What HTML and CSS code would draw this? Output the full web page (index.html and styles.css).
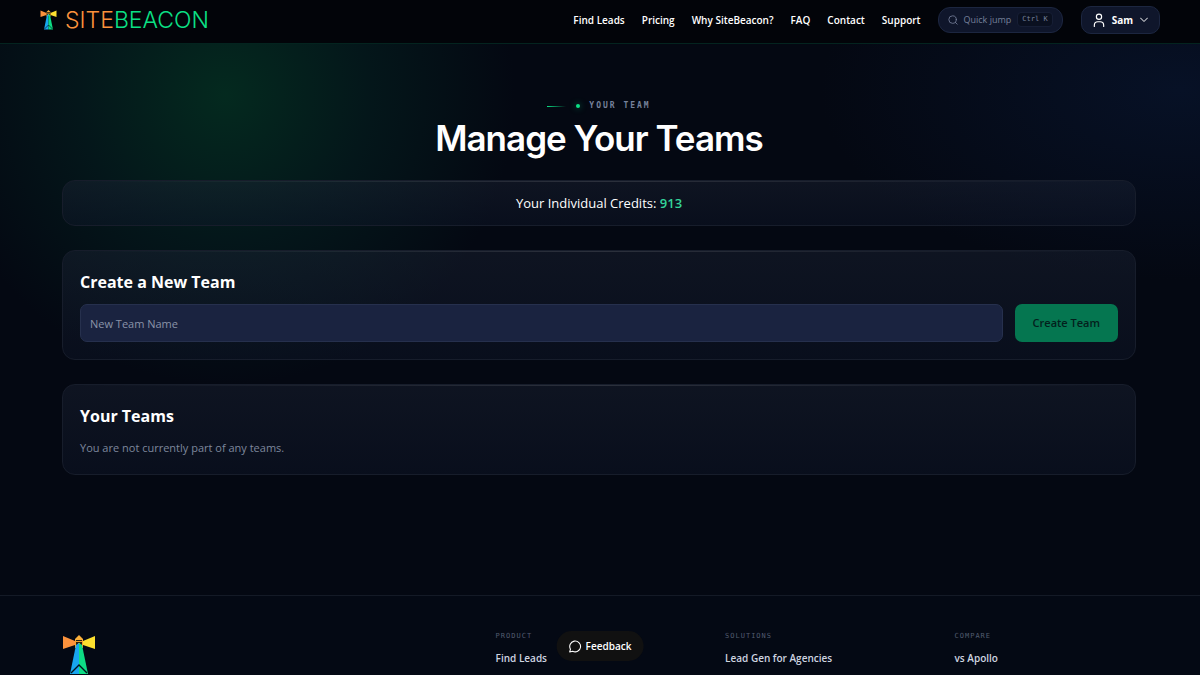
FILE: index.html
```html
<!DOCTYPE html>
<html lang="en">
<head>
    <meta charset="UTF-8">
    <meta name="viewport" content="width=device-width, initial-scale=1.0">
    <title>Manage Your Teams - SiteBeacon</title>
    <link rel="stylesheet" href="styles.css">
</head>
<body>
    <header class="header">
        <a class="brand" href="#">
            <svg class="brand-icon" viewBox="0 0 32 40" aria-hidden="true">
                <path d="M0 1l12 5v4L0 14z" fill="#fb923c"/>
                <path d="M32 1L20 6v4l12 4z" fill="#fde02f"/>
                <path d="M12 4l4-4 4 4v1h-8z" fill="#fbb03b"/>
                <path d="M12 5h8v8h-8z" fill="#2b2112"/>
                <path d="M13 6h6v1h-6zM15 8h2v4h-2zM12 5v8h1V5zM19 5v8h1V5z" fill="#f0a02c"/>
                <path d="M13 10l3-2v31H7z" fill="#18a5ee"/>
                <path d="M19 10l-3-2v31h9z" fill="#0ddc84"/>
                <path d="M8 38l8-8 8 8" fill="none" stroke="#04121c" stroke-width="1.4"/>
            </svg>
            <span class="brand-name"><span class="brand-site">SITE</span>BEACON</span>
        </a>
        <nav class="nav">
            <a href="#">Find Leads</a>
            <a href="#">Pricing</a>
            <a href="#">Why SiteBeacon?</a>
            <a href="#">FAQ</a>
            <a href="#">Contact</a>
            <a href="#">Support</a>
        </nav>
        <button class="quick-jump" type="button">
            <svg class="icon" width="10" height="10" viewBox="0 0 24 24" aria-hidden="true">
                <circle cx="11" cy="11" r="9"/>
                <path d="M22 22l-4.500-4.500"/>
            </svg>
            <span>Quick jump</span>
            <kbd>Ctrl K</kbd>
        </button>
        <button class="account" type="button">
            <svg class="icon" width="12" height="14" viewBox="0 0 20 24" aria-hidden="true">
                <circle cx="10" cy="6.500" r="4.500"/>
                <path d="M2 23v-2a6 6 0 0 1 6-6h4a6 6 0 0 1 6 6v2"/>
            </svg>
            <span>Sam</span>
            <svg class="icon" width="8" height="6" viewBox="0 0 16 12" aria-hidden="true">
                <path d="M1 2l7 7 7-7"/>
            </svg>
        </button>
    </header>

    <main class="main">
        <p class="eyebrow"><span class="eyebrow-line"></span><span class="eyebrow-dot"></span>Your Team</p>
        <h1>Manage Your Teams</h1>

        <section class="card credits">
            <p>Your Individual Credits: <strong>913</strong></p>
        </section>

        <section class="card">
            <h2><label for="team-name">Create a New Team</label></h2>
            <form class="team-form">
                <input type="text" id="team-name" placeholder="New Team Name">
                <button type="submit" disabled>Create Team</button>
            </form>
        </section>

        <section class="card">
            <h2>Your Teams</h2>
            <p class="empty">You are not currently part of any teams.</p>
        </section>
    </main>

    <footer class="footer">
        <div class="footer-grid">
            <svg class="footer-logo" viewBox="0 0 32 40" role="img" aria-label="SiteBeacon">
                <path d="M0 1l12 5v4L0 14z" fill="#fb923c"/>
                <path d="M32 1L20 6v4l12 4z" fill="#fde02f"/>
                <path d="M12 4l4-4 4 4v1h-8z" fill="#fbb03b"/>
                <path d="M12 5h8v8h-8z" fill="#2b2112"/>
                <path d="M13 6h6v1h-6zM15 8h2v4h-2zM12 5v8h1V5zM19 5v8h1V5z" fill="#f0a02c"/>
                <path d="M13 10l3-2v31H7z" fill="#18a5ee"/>
                <path d="M19 10l-3-2v31h9z" fill="#0ddc84"/>
                <path d="M8 38l8-8 8 8" fill="none" stroke="#04121c" stroke-width="1.4"/>
            </svg>
            <div class="footer-col">
                <h3>Product</h3>
                <a href="#">Find Leads</a>
            </div>
            <div class="footer-col">
                <h3>Solutions</h3>
                <a href="#">Lead Gen for Agencies</a>
            </div>
            <div class="footer-col">
                <h3>Compare</h3>
                <a href="#">vs Apollo</a>
            </div>
        </div>
    </footer>

    <button class="feedback" type="button">
        <svg class="icon" width="13" height="13" viewBox="0 0 24 24" aria-hidden="true">
            <path d="M3.500 17A10 10 0 1 1 7.500 20.800L2 22z"/>
        </svg>
        <span>Feedback</span>
    </button>
</body>
</html>
```
FILE: styles.css
```css
* {
    margin: 0;
    padding: 0;
    box-sizing: border-box;
}

body {
    min-height: 100vh;
    display: flex;
    flex-direction: column;
    color: #fff;
    font-family: "Open Sans", "Noto Sans", sans-serif;
    font-size: 12px;
    line-height: 18px;
    background:
        radial-gradient(ellipse 290px 290px at 225px 95px, rgba(4, 50, 34, 0.8), rgba(4, 44, 38, 0.4) 50%, transparent),
        radial-gradient(ellipse 360px 190px at 1180px 90px, rgba(10, 26, 58, 0.5), transparent),
        #040812;
}

a {
    color: inherit;
    text-decoration: none;
}

button,
input {
    font: inherit;
}

button {
    cursor: pointer;
}

.icon {
    fill: none;
    stroke: currentColor;
    stroke-width: 2;
    stroke-linecap: round;
    stroke-linejoin: round;
}

.header {
    display: flex;
    align-items: center;
    height: 44px;
    padding: 0 40px 4px;
    background: #020409;
    border-bottom: 1px solid #04241f;
}

.brand {
    display: flex;
    align-items: center;
    gap: 8px;
}

.brand-icon {
    width: 17px;
    height: 20px;
}

.brand-name {
    color: #0be085;
    font-family: Inter, sans-serif;
    font-size: 23px;
    font-weight: 300;
    line-height: 28px;
}

.brand-site {
    color: #fb923c;
}

.nav {
    display: flex;
    gap: 17px;
    margin-left: auto;
    font-size: 10px;
    font-weight: 600;
}

.quick-jump,
.account {
    display: flex;
    align-items: center;
    background: #0f162b;
    border: 1px solid #1c2640;
}

.quick-jump {
    gap: 6px;
    height: 26px;
    margin: 0 18px 0 17px;
    padding: 0 9px;
    border-radius: 12px;
    color: #76809a;
    font-size: 9px;
}

.quick-jump kbd {
    padding: 0 4px;
    background: #0a1020;
    border: 1px solid #161e35;
    border-radius: 4px;
    font-family: "DejaVu Sans Mono", monospace;
    font-size: 7px;
    line-height: 13px;
}

.account {
    gap: 7px;
    height: 28px;
    padding: 0 11px;
    border-radius: 10px;
    color: #fff;
    font-size: 10px;
    font-weight: 700;
}

.main {
    flex: 1;
    padding: 54px 64px 120px 62px;
}

.eyebrow {
    display: flex;
    align-items: center;
    justify-content: center;
    color: #76819b;
    font-family: "DejaVu Sans Mono", monospace;
    font-size: 8px;
    font-weight: 700;
    line-height: 16px;
    letter-spacing: 2px;
    text-transform: uppercase;
}

.eyebrow-line {
    width: 19px;
    height: 1px;
    margin-right: 10px;
    background: linear-gradient(90deg, #0be085, transparent);
}

.eyebrow-dot {
    width: 4px;
    height: 4px;
    margin-right: 9px;
    border-radius: 50%;
    background: #0be085;
    box-shadow: 0 0 6px rgba(11, 224, 133, 0.6);
}

h1 {
    margin: 4px 0 22px;
    font-family: Inter, sans-serif;
    font-size: 35px;
    font-weight: 600;
    line-height: 40px;
    letter-spacing: -1px;
    text-align: center;
}

.card {
    position: relative;
    margin-bottom: 24px;
    padding: 19px 17px 17px;
    background: linear-gradient(rgba(30, 38, 56, 0.4), rgba(16, 24, 44, 0.4));
    border: 1px solid #171d2b;
    border-radius: 13px;
}

.card:last-child {
    margin-bottom: 0;
}

/* highlight along the top edge */
.card::before {
    content: "";
    position: absolute;
    top: 0;
    left: 12px;
    right: 12px;
    height: 1px;
    background: linear-gradient(90deg, transparent, rgba(255, 255, 255, 0.12), transparent);
}

.credits {
    padding: 12px 17px;
    font-size: 13px;
    line-height: 20px;
    text-align: center;
}

.credits strong {
    color: #34d399;
    font-weight: 600;
}

h2 {
    margin-bottom: 9px;
    font-size: 16px;
    font-weight: 700;
    line-height: 25px;
}

.team-form {
    display: flex;
    gap: 12px;
}

.team-form input {
    flex: 1;
    min-width: 0;
    height: 38px;
    padding: 0 9px;
    background: #1a2340;
    border: 1px solid #26304d;
    border-radius: 7px;
    color: #fff;
    font-size: 11px;
}

.team-form input::placeholder {
    color: #8a93a8;
}

.team-form button {
    padding: 0 18px;
    background: #057650;
    border: 0;
    border-radius: 7px;
    color: #03201c;
    font-size: 11px;
    font-weight: 600;
}

.empty {
    color: #7d879c;
    font-size: 11px;
    line-height: 19px;
}

.footer {
    padding: 36px 64px 0 62px;
    background: #040914;
    border-top: 1px solid #141a26;
}

.footer-grid {
    display: grid;
    grid-template-columns: 17fr 8fr 8fr 8fr;
    gap: 48px;
}

.footer-logo {
    width: 34px;
    height: 40px;
    margin-top: 3px;
}

.footer-col h3 {
    margin-bottom: 8px;
    color: #525c70;
    font-family: "DejaVu Sans Mono", monospace;
    font-size: 7px;
    font-weight: 400;
    line-height: 9px;
    letter-spacing: 1px;
    text-transform: uppercase;
}

.footer-col a {
    color: #cfd5e0;
    font-size: 10px;
    font-weight: 600;
}

.feedback {
    position: fixed;
    bottom: 14px;
    left: 50%;
    display: flex;
    align-items: center;
    gap: 4px;
    height: 30px;
    padding: 0 12px;
    transform: translateX(-50%);
    background: #111111;
    border: 0;
    border-radius: 15px;
    color: #fff;
    font-size: 10px;
    font-weight: 600;
}
```
